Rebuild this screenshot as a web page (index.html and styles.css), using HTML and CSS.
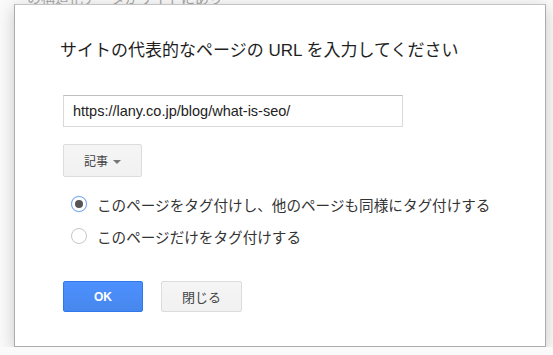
FILE: index.html
```html
<!DOCTYPE html>
<html lang="ja">
<head>
    <meta charset="UTF-8">
    <meta name="viewport" content="width=device-width, initial-scale=1.0">
    <title>代表的なページの URL</title>
    <link rel="stylesheet" href="styles.css">
</head>
<body>

    <!-- 背景のページ -->
    <div class="page-text">の構造化データがサイトにあり</div>

    <!-- ダイアログ -->
    <div class="dialog">
        <h1 class="dialog__title">サイトの代表的なページの URL を入力してください</h1>

        <input class="dialog__input" type="text" value="https://lany.co.jp/blog/what-is-seo/">

        <div class="dialog__type">
            <button class="btn btn--menu">記事<span class="btn__arrow"></span></button>
        </div>

        <div class="options">
            <label class="options__row">
                <input type="radio" name="tag" checked>
                <span>このページをタグ付けし、他のページも同様にタグ付けする</span>
            </label>
            <label class="options__row">
                <input type="radio" name="tag">
                <span>このページだけをタグ付けする</span>
            </label>
        </div>

        <div class="dialog__buttons">
            <button class="btn btn--ok">OK</button>
            <button class="btn btn--close">閉じる</button>
        </div>
    </div>

</body>
</html>
```

FILE: styles.css
```css
body {
    margin: 0;
    padding: 0;
    background-color: #fafafa;
    font-family: "Liberation Sans", "Noto Sans CJK JP", sans-serif;
    color: #222;
}

.page-text {
    margin-top: -10px;
    height: 14px;
    padding-left: 27px;
    font-size: 14px;
    line-height: 16px;
    color: #a8a8a8;
    white-space: nowrap;
}

.dialog {
    position: relative; /* para pintar encima del texto de fondo */
    box-sizing: border-box;
    width: 532px;
    margin-left: 14px;
    padding: 34px 48px;
    background-color: #fff;
    border: 1px solid #acacac;
    border-top-color: #c4c4c4;
    box-shadow: 0 4px 16px rgba(0, 0, 0, 0.2);
}

.dialog__title {
    margin: 0 0 0 -3px;
    font-size: 17px;
    font-weight: normal;
    line-height: 24px;
    color: #1f1f1f;
    white-space: nowrap;
}

.dialog__input {
    display: block;
    box-sizing: border-box;
    width: 340px;
    height: 32px;
    margin: 32px 0 0 0;
    padding: 0 9px;
    border: 1px solid #d9d9d9;
    border-top-color: #c0c0c0;
    font-family: "Liberation Sans", sans-serif;
    font-size: 14.5px;
    color: #222;
    outline: none;
}

.dialog__type {
    margin-top: 17px;
}

.btn {
    box-sizing: border-box;
    height: 31px;
    border-radius: 2px;
    font-family: "Liberation Sans", "Noto Sans CJK JP", sans-serif;
    cursor: pointer;
    padding: 0;
}

.btn--menu {
    display: flex;
    align-items: center;
    justify-content: center;
    width: 79px;
    height: 33px;
    background: linear-gradient(#f5f5f5, #f1f1f1);
    border: 1px solid #dcdcdc;
    color: #444;
    font-size: 12px;
}

.btn__arrow {
    width: 0;
    height: 0;
    margin-left: 5px;
    margin-top: 2px;
    border-left: 4px solid transparent;
    border-right: 4px solid transparent;
    border-top: 4px solid #777;
}

.options {
    margin-top: 11px;
    padding-left: 8px;
}

.options__row {
    display: flex;
    align-items: center;
    gap: 10px;
    height: 32px;
    font-size: 14.6px;
    color: #333;
    cursor: pointer;
}

.options__row input {
    appearance: none;
    -webkit-appearance: none;
    box-sizing: border-box;
    width: 16px;
    height: 16px;
    margin: 0;
    border-radius: 50%;
    border: 1px solid #c6c6c6;
    background-color: #fff;
    display: flex;
    align-items: center;
    justify-content: center;
}

.options__row input:checked {
    border-color: #7aa7f0;
    box-shadow: 0 0 1px rgba(77, 144, 254, 0.5);
}

.options__row input:checked::after {
    content: "";
    width: 8px;
    height: 8px;
    border-radius: 50%;
    background-color: #555;
}

.dialog__buttons {
    display: flex;
    gap: 18px;
    margin-top: 29px;
}

.btn--ok {
    width: 80px;
    background: linear-gradient(#4d90fe, #4787ed);
    border: 1px solid #3079ed;
    color: #fff;
    font-size: 12px;
    font-weight: bold;
}

.btn--close {
    width: 81px;
    background: linear-gradient(#f5f5f5, #f1f1f1);
    border: 1px solid #dcdcdc;
    color: #444;
    font-size: 13px;
}
```
